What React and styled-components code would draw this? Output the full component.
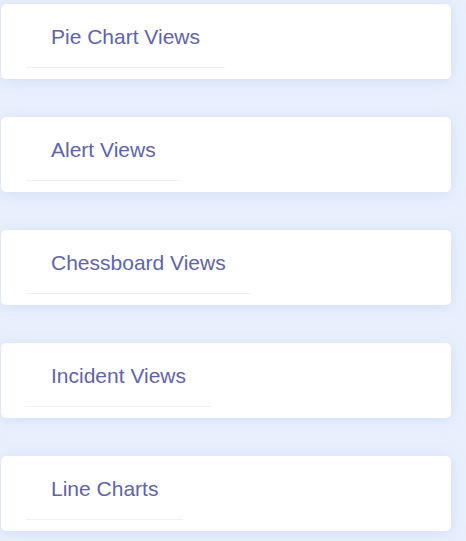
import React from "react";
import styled, { createGlobalStyle } from "styled-components";

const GlobalStyle = createGlobalStyle`
  html, body {
    margin: 0;
    padding: 0;
    background: #e8f0fd;
  }
`;

// Page wrapper holding the stacked view cards
const Page = styled.div`
  display: flex;
  flex-direction: column;
  gap: 38px;
  padding: 4px 15px 10px 1px;
  min-height: 541px;
  box-sizing: border-box;
  font-family: "Liberation Sans", Arial, sans-serif;
`;

const Card = styled.div`
  background: #ffffff;
  border-radius: 5px;
  height: 75px;
  box-sizing: border-box;
  padding: 21px 0 0 25px;
  box-shadow: 0 2px 14px rgba(190, 205, 235, 0.5);
`;

const Title = styled.h3`
  display: inline-block;
  margin: 0;
  padding: 0 25px 18px;
  font-size: 21px;
  font-weight: 400;
  line-height: 24px;
  color: #6063ad;
  border-bottom: 1px solid #f0f1f5;
`;

const views = [
  "Pie Chart Views",
  "Alert Views",
  "Chessboard Views",
  "Incident Views",
  "Line Charts",
];

const App = () => (
  <>
    <GlobalStyle />
    <Page>
      {views.map((name) => (
        <Card key={name}>
          <Title>{name}</Title>
        </Card>
      ))}
    </Page>
  </>
);

export default App;
